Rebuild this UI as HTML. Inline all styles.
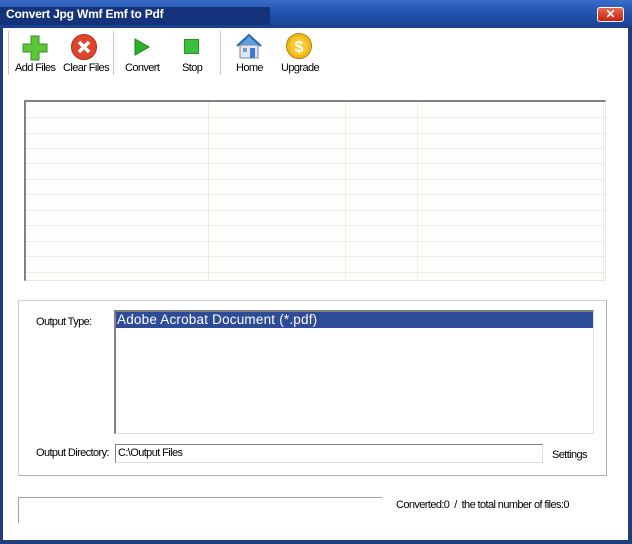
<!DOCTYPE html>
<html><head><style>
*{margin:0;padding:0;box-sizing:border-box}
body{width:632px;height:544px;overflow:hidden;background:#1f3f7a;font-family:"Liberation Sans",sans-serif;position:relative}
.a{position:absolute}
.t{font-size:11px;color:#000;letter-spacing:-0.6px}
.hl{position:absolute;left:0;width:100%;height:1px;background:#ecebe4}
.vl{position:absolute;top:0;width:1px;height:100%;background:#ecebe4}
</style></head><body>
<div class="a" style="left:0;top:0;width:632px;height:28px;background:linear-gradient(#3a6cc8,#2456b3 40%,#1b3f8c)"></div>
<div class="a" style="left:0;top:7px;width:270px;height:18px;background:#14337a"></div>
<div class="a" style="left:6px;top:7px;color:#fff;font-weight:bold;font-size:12px;letter-spacing:-0.2px;font-family:'Liberation Sans',sans-serif">Convert Jpg Wmf Emf to Pdf</div>
<div class="a" style="left:597px;top:7px;width:27px;height:15px;background:linear-gradient(#e86a50,#c8200c);border:1px solid #fff;border-radius:3px;color:#fff;font-size:12px;font-weight:bold;text-align:center;line-height:13px">✕</div>
<div class="a" style="left:3px;top:28px;width:625px;height:512px;background:#fff"></div>

<svg class="a" style="left:20px;top:33px" width="30" height="30" viewBox="0 0 30 30"><path d="M11 3h8v8h8v8h-8v8h-8v-8H3v-8h8z" fill="#5ec63a" stroke="#3a8f20"/></svg>
<svg class="a" style="left:70px;top:33px" width="28" height="28"><circle cx="14" cy="14" r="12.5" fill="#e0442c" stroke="#b02a18"/><path d="M9 9l10 10M19 9l-10 10" stroke="#fff" stroke-width="3.5"/></svg>
<svg class="a" style="left:133px;top:37px" width="18" height="20"><path d="M2 2l14 8-14 8z" fill="#2bb02b" stroke="#1a801a"/></svg>
<div class="a" style="left:184px;top:39px;width:15px;height:15px;background:#3cc03c;border:1px solid #2a902a"></div>
<svg class="a" style="left:234px;top:32px" width="30" height="28"><path d="M3 14L15 3l12 11" fill="#5aa0e0" stroke="#2a6aaa" stroke-width="2"/><rect x="6" y="13" width="18" height="13" fill="#e0e6ee" stroke="#7a8aa0"/><rect x="16" y="16" width="5" height="10" fill="#3a7ad0"/><rect x="9" y="16" width="4" height="4" fill="#7a9ac0"/></svg>
<svg class="a" style="left:285px;top:32px" width="28" height="28"><circle cx="14" cy="14" r="12.5" fill="#f0b818" stroke="#b88208"/><circle cx="14" cy="14" r="9" fill="#f8c830"/><text x="14" y="20" font-size="16" font-weight="bold" fill="#fff" text-anchor="middle" font-family="Liberation Sans">$</text></svg>
<div class="a" style="left:8px;top:31px;width:1px;height:44px;background:#c8c8c8"></div>
<div class="a" style="left:113px;top:31px;width:1px;height:44px;background:#c8c8c8"></div>
<div class="a" style="left:220px;top:31px;width:1px;height:44px;background:#c8c8c8"></div>
<div class="a t" style="left:15px;top:62px">Add Files</div>
<div class="a t" style="left:63px;top:62px">Clear Files</div>
<div class="a t" style="left:125px;top:62px">Convert</div>
<div class="a t" style="left:182px;top:62px">Stop</div>
<div class="a t" style="left:236px;top:62px">Home</div>
<div class="a t" style="left:281px;top:62px">Upgrade</div>

<div class="a" style="left:24px;top:100px;width:582px;height:181px;background:#fefefc;border-top:2px solid #808080;border-left:2px solid #808080;border-right:1px solid #e6e6e0;border-bottom:1px solid #e6e6e0;overflow:hidden">
<div class="vl" style="left:182px"></div><div class="vl" style="left:319px"></div><div class="vl" style="left:391px"></div><div class="vl" style="left:577px"></div>
<div class="hl" style="top:15px"></div><div class="hl" style="top:31px"></div><div class="hl" style="top:46px"></div><div class="hl" style="top:61px"></div><div class="hl" style="top:77px"></div><div class="hl" style="top:92px"></div><div class="hl" style="top:108px"></div><div class="hl" style="top:123px"></div><div class="hl" style="top:139px"></div><div class="hl" style="top:154px"></div><div class="hl" style="top:170px"></div>
</div>

<div class="a" style="left:18px;top:300px;width:589px;height:176px;border:1px solid #d0d0c8;border-right-color:#b0b0a8;border-bottom-color:#b0b0a8"></div>
<div class="a t" style="left:36px;top:316px">Output Type:</div>
<div class="a" style="left:114px;top:310px;width:480px;height:124px;border-top:2px solid #808080;border-left:2px solid #808080;border-right:1px solid #e0e0d8;border-bottom:1px solid #e0e0d8;background:#fff">
<div style="height:16px;background:#2e4b98;color:#fff;font-size:13.5px;padding-left:1px;line-height:15px;letter-spacing:0.2px">Adobe Acrobat Document (*.pdf)</div></div>
<div class="a t" style="left:36px;top:447px">Output Directory:</div>
<div class="a" style="left:115px;top:444px;width:428px;height:19px;border-top:1px solid #808080;border-left:1px solid #808080;border-right:1px solid #e0e0d8;border-bottom:1px solid #e0e0d8"></div>
<div class="a t" style="left:118px;top:447px">C:\Output Files</div>
<div class="a t" style="left:552px;top:449px">Settings</div>

<div class="a" style="left:18px;top:497px;width:364px;height:26px;border-top:1px solid #a0a0a0;border-left:1px solid #a0a0a0"></div>
<div class="a t" style="left:396px;top:499px">Converted:0 &nbsp;/ &nbsp;the total number of files:0</div>
</body></html>
